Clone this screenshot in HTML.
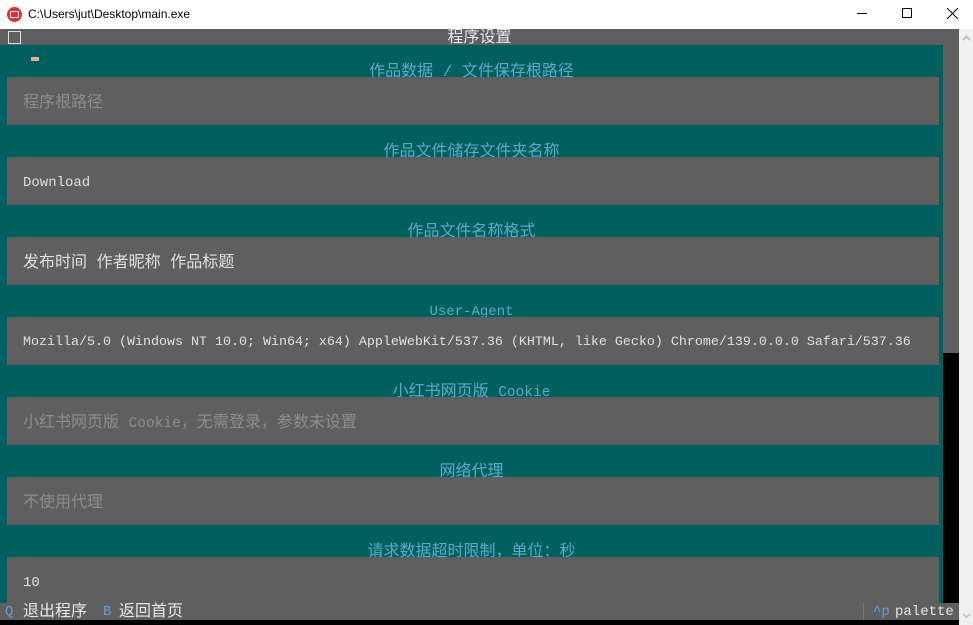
<!DOCTYPE html>
<html><head><meta charset="utf-8"><style>
*{margin:0;padding:0;box-sizing:border-box}
body{width:973px;height:625px;overflow:hidden;background:#000;position:relative;font-family:"Liberation Mono","Noto Sans CJK SC",monospace;font-size:13.33px;}
.abs{position:absolute}
.tb{left:0;top:0;width:973px;height:29px;background:#fff;font-family:"Liberation Sans",sans-serif;font-size:12px;color:#000}
.lbl{position:absolute;left:0;width:943px;text-align:center;color:#5fa8c8;height:16px;line-height:16px;font-size:16px;margin-top:3px}
.box{position:absolute;left:7px;width:932px;height:48px;background:#5f5f5f;padding-left:16px;padding-top:2px;line-height:48px;color:#e0e0e0;font-size:14px;white-space:nowrap}
.ph{color:#8c8c8c;font-size:16px}
.cj{font-size:16px}
</style></head><body>
<div class="abs tb">
 <div class="abs" style="left:7px;top:7px;width:15px;height:15px;border-radius:50%;background:#e03030"><div class="abs" style="left:3px;top:4px;width:9px;height:7px;border:1.5px solid #fff;border-radius:1px"></div></div>
 <div class="abs" style="left:28px;top:7px">C:\Users\jut\Desktop\main.exe</div>
 <div class="abs" style="left:857px;top:13px;width:10px;height:1px;background:#000"></div>
 <div class="abs" style="left:902px;top:8px;width:10px;height:10px;border:1px solid #000"></div>
 <svg class="abs" style="left:947px;top:8px" width="11" height="11"><path d="M0 0L11 11M11 0L0 11" stroke="#000" stroke-width="1"/></svg>
</div>
<div class="abs" style="left:0;top:29px;width:959px;height:16px;background:#5f5f5f"></div>
<div class="abs" style="left:8px;top:31px;width:13px;height:13px;border:1px solid #ddd"></div>
<div class="abs" style="left:0;top:30px;width:959px;text-align:center;color:#e8e8e8;line-height:16px;font-size:16px">程序设置</div>
<div class="abs" style="left:959px;top:29px;width:14px;height:596px;background:#f0f0f0"></div>
<svg class="abs" style="left:962px;top:35px" width="9" height="6"><path d="M1 5L4.5 1.5L8 5" stroke="#c0c0c0" stroke-width="2" fill="none"/></svg>
<svg class="abs" style="left:962px;top:613px" width="9" height="6"><path d="M1 1L4.5 4.5L8 1" stroke="#c0c0c0" stroke-width="1.5" fill="none"/></svg>
<div class="abs" style="left:943px;top:45px;width:16px;height:308px;background:#5f5f5f"></div>
<div class="abs" style="left:0;top:45px;width:943px;height:558px;background:#005f5f"></div>
<div class="abs" style="left:31px;top:57px;width:8px;height:4px;background:#ffa0a0"></div>

<div class="lbl" style="top:61px">作品数据 / 文件保存根路径</div>
<div class="box" style="top:77px"><span class="ph">程序根路径</span></div>
<div class="lbl" style="top:141px">作品文件储存文件夹名称</div>
<div class="box" style="top:157px">Download</div>
<div class="lbl" style="top:221px">作品文件名称格式</div>
<div class="box cj" style="top:237px">发布时间 作者昵称 作品标题</div>
<div class="lbl" style="top:301px;font-size:14px">User-Agent</div>
<div class="box" style="top:317px;font-size:13.33px">Mozilla/5.0 (Windows NT 10.0; Win64; x64) AppleWebKit/537.36 (KHTML, like Gecko) Chrome/139.0.0.0 Safari/537.36</div>
<div class="lbl" style="top:381px">小红书网页版 <span style="font-size:14.5px">Cookie</span></div>
<div class="box" style="top:397px"><span class="ph">小红书网页版 <span style="font-size:14.5px">Cookie</span>，无需登录，参数未设置</span></div>
<div class="lbl" style="top:461px">网络代理</div>
<div class="box" style="top:477px"><span class="ph">不使用代理</span></div>
<div class="lbl" style="top:541px">请求数据超时限制，单位：秒</div>
<div class="box" style="top:557px;height:46px">10</div>

<div class="abs" style="left:0;top:603px;width:959px;height:17px;background:#5f5f5f;color:#e8e8e8;line-height:17px;font-size:16px;white-space:nowrap">
 <span style="position:absolute;left:5px;top:1px;color:#6a9ad8;font-size:14px">Q</span>
 <span style="position:absolute;left:23px;top:1px">退出程序</span>
 <span style="position:absolute;left:103px;top:1px;color:#6a9ad8;font-size:14px">B</span>
 <span style="position:absolute;left:119px;top:1px">返回首页</span>
 <span style="position:absolute;left:863px;top:0;width:1px;height:17px;background:#777"></span>
 <span style="position:absolute;left:873px;top:1px;color:#6a9ad8;font-size:14px">^p</span>
 <span style="position:absolute;left:895px;top:1px;font-size:14px">palette</span>
</div>
</body></html>
